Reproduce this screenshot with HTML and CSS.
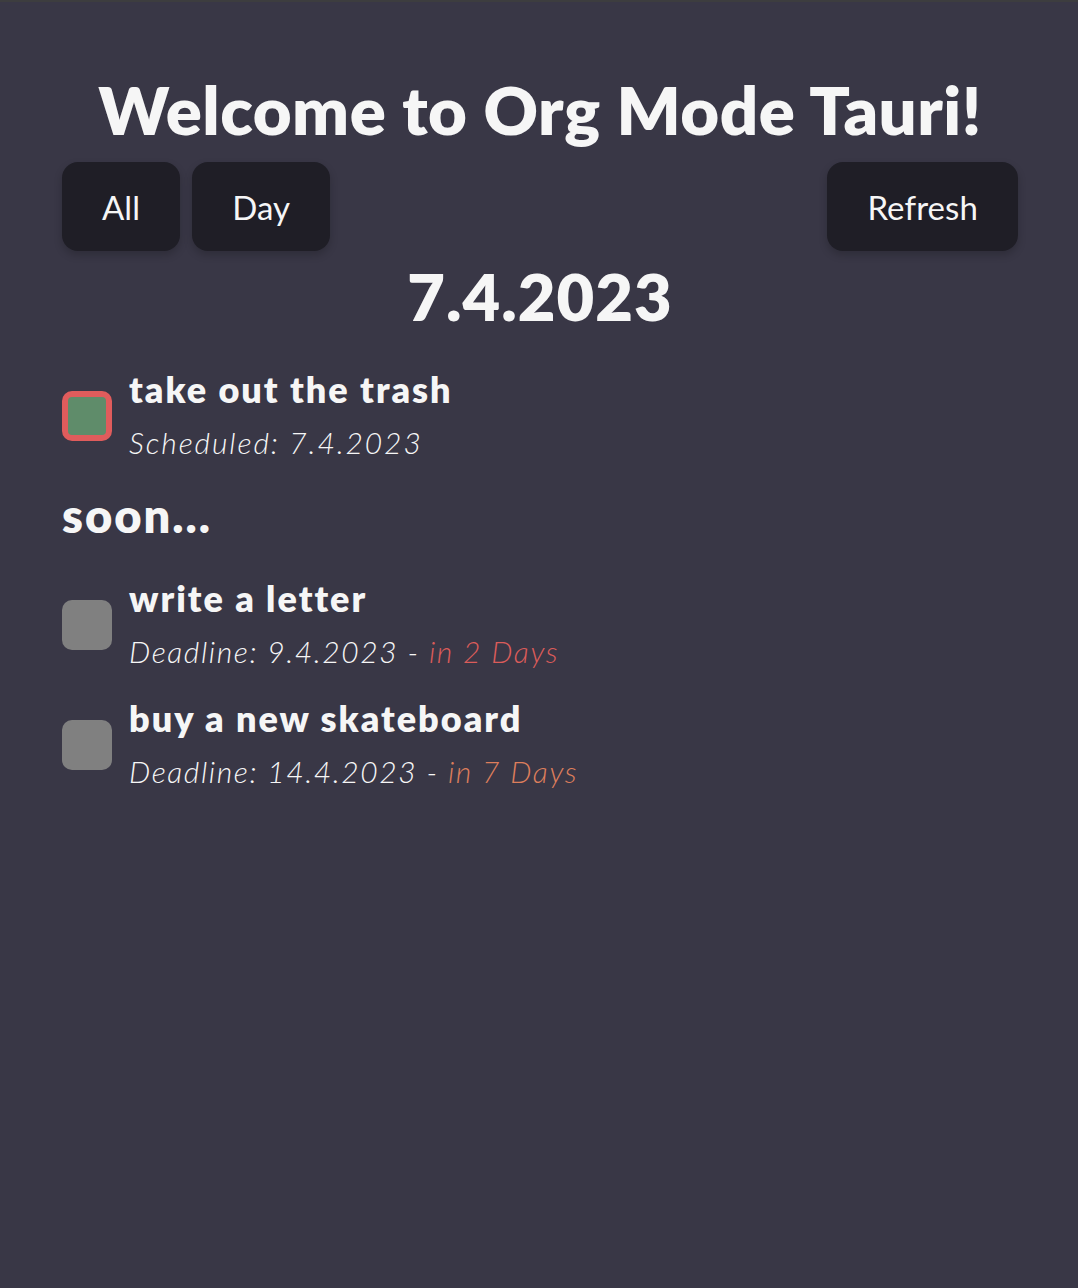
FILE: index.html
```html
<!DOCTYPE html>
<html>
<head>
<meta charset="utf-8">
<link rel="stylesheet" href="styles.css">
</head>
<body>
<div class="topline"></div>
<main class="app">
  <h1 class="title">Welcome to Org Mode Tauri!</h1>
  <div class="toolbar">
    <div class="group">
      <button class="btn">All</button>
      <button class="btn">Day</button>
    </div>
    <button class="btn">Refresh</button>
  </div>
  <h2 class="date">7.4.2023</h2>
  <ul class="list">
    <li class="item">
      <span class="check check-today"></span>
      <div class="info">
        <div class="name">take out the trash</div>
        <div class="meta meta-wide">Scheduled: 7.4.2023</div>
      </div>
    </li>
  </ul>
  <h3 class="soon">soon...</h3>
  <ul class="list">
    <li class="item">
      <span class="check"></span>
      <div class="info">
        <div class="name">write a letter</div>
        <div class="meta">Deadline: 9.4.2023 - <span class="due-near">in 2 Days</span></div>
      </div>
    </li>
    <li class="item">
      <span class="check"></span>
      <div class="info">
        <div class="name">buy a new skateboard</div>
        <div class="meta">Deadline: 14.4.2023 - <span class="due-later">in 7 Days</span></div>
      </div>
    </li>
  </ul>
</main>
</body>
</html>
```
FILE: styles.css
```css
html, body {
  margin: 0;
  padding: 0;
  background: #393746;
  color: #f6f6f6;
  font-family: Lato, "Noto Sans", sans-serif;
  height: 100%;
}
.topline {
  height: 2px;
  background: #3d3d3f;
}
.app {
  padding: 0 60px 0 62px;
}
.title {
  margin: 67px 0 13px;
  text-align: center;
  font-size: 67px;
  font-weight: 800;
  line-height: 80px;
  letter-spacing: 0.5px;
}
.toolbar {
  display: flex;
  justify-content: space-between;
}
.group {
  display: flex;
  gap: 12px;
}
.btn {
  height: 89px;
  padding: 0 40px;
  border: none;
  border-radius: 16px;
  background: #1f1e26;
  color: #f6f6f6;
  font-family: inherit;
  font-size: 33px;
  letter-spacing: 0.1px;
  box-shadow: 0 4px 8px rgba(0,0,0,0.2);
}
.date {
  margin: 5px 0 28px;
  text-align: center;
  font-size: 65px;
  font-weight: 800;
  line-height: 80px;
  letter-spacing: 1px;
}
.list {
  list-style: none;
  margin: 0;
  padding: 0;
  display: flex;
  flex-direction: column;
  gap: 14px;
}
.item {
  display: flex;
  align-items: center;
  gap: 17px;
}
.check {
  width: 50px;
  height: 50px;
  box-sizing: border-box;
  border-radius: 10px;
  background: #808080;
  flex: none;
  margin-top: -2px;
}
.check-today {
  background: #5f8c6a;
  border: 6px solid #e05c5c;
}
.name {
  font-size: 36px;
  font-weight: 800;
  line-height: 50px;
  letter-spacing: 2px;
}
.meta {
  font-size: 30px;
  font-style: italic;
  font-weight: 300;
  line-height: 56px;
  letter-spacing: 1.6px;
}
.meta-wide {
  letter-spacing: 1.9px;
}
.due-near { color: #db5c5a; }
.due-later { color: #dd7e5c; }
.soon {
  margin: 17px 0 30px;
  font-size: 47px;
  font-weight: 800;
  line-height: 56px;
  letter-spacing: 2px;
}
```
